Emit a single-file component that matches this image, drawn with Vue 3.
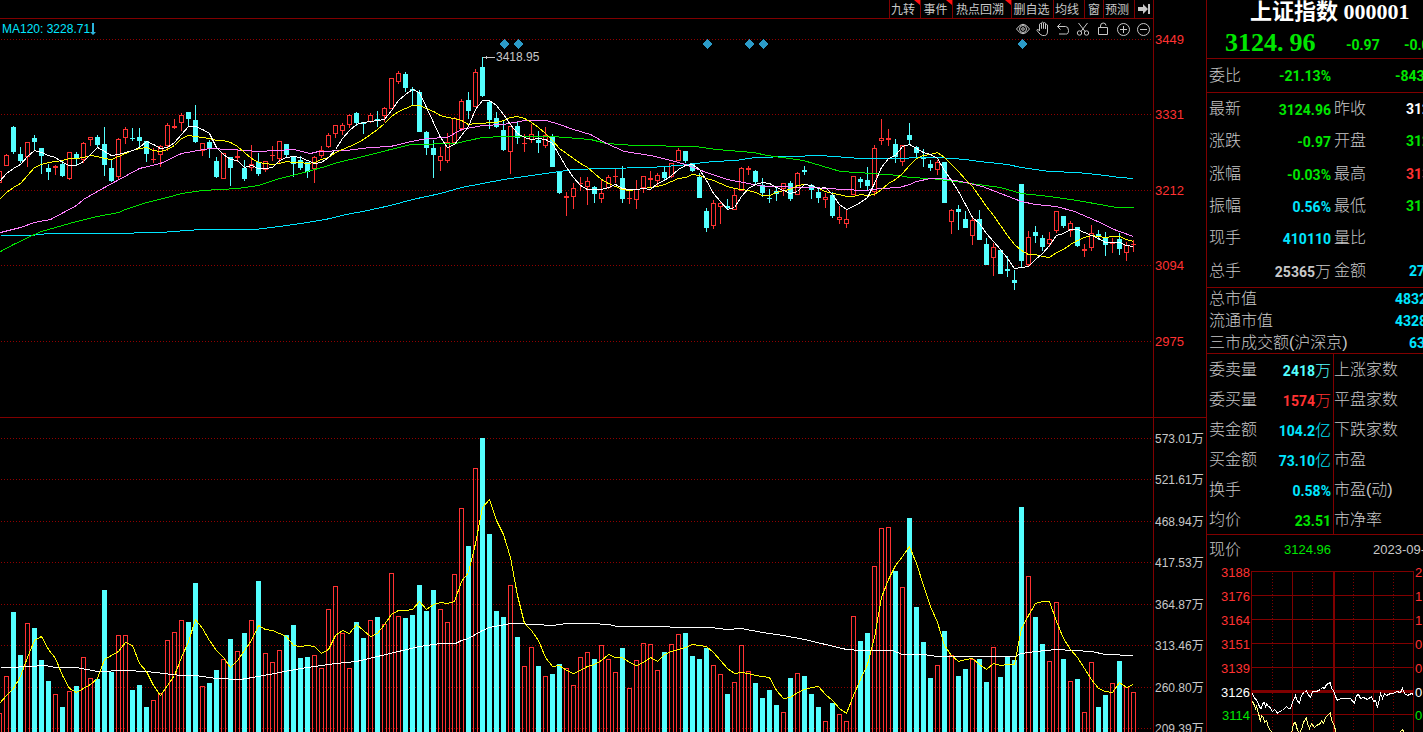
<script setup>
const STEP = 7

// open/close boxes and wicks: [kind, high, top, bottom, low]; d = falling, u = rising
const candles = `u171,171,183,183 u154,155,166,166 d126,127,152,154 d147,154,161,163 u142,142,157,167 d135,138,142,150 d148,148,156,174
d164,168,172,180 u165,166,168,175 d160,164,176,177 u152,152,179,180 d152,154,158,165 u142,143,160,163 u137,137,140,146 d135,137,145,148
d127,144,165,176 d160,168,181,182 u138,139,177,180 u127,129,138,144 d128,138,139,141 d128,137,141,148 d141,141,154,162 u148,159,160,163
u145,146,155,167 u123,125,146,151 u119,126,128,129 u113,115,123,131 d112,112,119,127 d105,120,142,143 u143,143,151,156 d140,142,148,158
d157,161,177,178 u153,153,179,179 d157,157,168,186 u150,156,158,162 d160,168,179,181 u145,164,168,171 d153,162,174,176 u161,161,170,172
u146,155,156,161 u141,141,159,164 d144,144,155,157 d156,157,164,177 d156,160,168,170 d162,162,172,178 u156,157,169,183 u146,150,156,158
u133,135,147,148 u125,125,134,138 u123,125,131,135 u114,115,125,128 d112,113,123,126 d122,122,124,134 u113,115,122,123 d111,119,120,127
u107,108,116,122 u78,78,109,109 u71,73,82,84 d72,74,88,92 d87,89,91,105 d90,92,132,132 d131,132,148,155 d140,148,155,178 u147,156,161,171
u133,142,161,163 u117,118,143,143 u99,101,129,131 d92,100,111,119 u69,72,107,107 d57,67,96,97 d101,102,120,129 d112,118,127,128
d121,130,150,151 u126,126,152,174 d122,126,138,144 u134,143,144,152 u124,134,140,143 d131,140,143,153 u127,135,146,148 d134,136,167,167
d172,172,193,194 u192,196,198,216 u183,188,197,209 u177,183,184,191 u177,181,187,205 d186,187,194,203 u180,193,199,203 u175,177,188,189
u168,176,177,183 d166,178,199,203 u189,198,199,204 u180,189,200,209 u176,176,188,193 u171,178,180,187 u173,175,181,187 d167,172,178,180
u163,163,177,178 u148,150,161,161 d151,151,161,163 d163,163,171,172 d173,177,198,198 d208,211,228,232 u200,203,226,229 u201,203,207,224
d199,206,208,209 u189,195,210,210 u167,168,191,191 u166,168,170,175 d170,171,182,185 d178,185,193,197 d189,198,199,203 d186,191,194,201
u183,183,189,196 d181,183,199,201 u172,173,195,195 d166,170,172,175 d184,185,190,199 d189,192,198,203 u193,197,200,208 d192,195,216,218
u206,217,220,224 u209,219,224,228 u176,176,195,195 d177,179,182,188 d167,180,186,190 u145,148,192,196 u119,138,141,145 u129,138,140,146
d139,144,157,163 u145,145,162,166 d123,135,140,144 d146,147,153,159 d149,157,159,167 d160,164,168,171 u160,162,170,175 d162,162,203,203
u209,210,222,234 d205,209,212,230 d211,219,228,228 u217,220,236,245 d210,219,240,240 d238,244,265,265 u243,247,258,276 d250,250,274,274
d256,269,271,277 d270,280,283,290 d184,184,261,267 u231,237,265,266 d226,232,236,243 d235,238,247,251 u232,239,244,247 u211,211,231,233
d216,216,226,228 u221,223,231,237 d227,227,246,247 u244,249,251,257 u225,233,248,251 d230,234,237,240 d232,237,245,256 u238,243,244,253
d233,239,249,255 u242,245,253,261 u240,244,245,252`.split(/\s+/).map((s, i) => {
  const [high, top, bottom, low] = s.slice(1).split(',').map(Number)
  const x = STEP * i - 1
  const up = s[0] === 'u'
  return { x, up, high, top, bottom, low, solid: !up || bottom - top <= 2 }
})

const volumes = [713, 676, 612, 655, 623, 628, 660, 681, 694, 707, 691, 686, 657, 678, 679, 590, 672, 635, 635, 690, 685, 707, 700, 693, 640, 632, 620,
  622, 583, 686, 683, 670, 659, 639, 651, 633, 620, 581, 653, 662, 650, 635, 625, 658, 657, 655, 668, 609, 586, 633, 668, 622, 638, 620, 617, 624, 573,
  616, 618, 615, 585, 611, 590, 609, 622, 574, 508, 546, 468, 438, 534, 611, 617, 585, 637, 666, 647, 666, 676, 674, 664, 668, 685, 657, 652, 659, 645,
  659, 672, 648, 688, 660, 643, 644, 670, 652, 644, 634, 633, 656, 659, 648, 665, 674, 694, 682, 645, 671, 683, 698, 690, 705, 712, 678, 673, 676, 694,
  707, 721, 703, 714, 721, 616, 641, 633, 566, 528, 527, 571, 587, 518, 607, 642, 678, 665, 631, 655, 676, 669, 659, 659, 682, 647, 677, 656, 660, 507,
  576, 617, 644, 661, 602, 659, 681, 679, 712, 662, 707, 695, 683, 661, 687, 692]

const perBar = (ys) => ys.map((y, i) => `${STEP * i - 1},${y}`).join(' ')

const ma5 = perBar([181, 173, 168, 164, 156, 150, 152, 155, 157, 162, 165, 165, 161, 154, 147, 151, 155, 154, 152, 150, 147, 141, 144, 148, 147, 142,
  134, 126, 126, 129, 133, 147, 154, 159, 160, 167, 165, 168, 168, 167, 160, 157, 156, 157, 160, 163, 162, 157, 149, 138, 130, 124, 122, 121, 120, 119,
  110, 100, 94, 89, 92, 107, 122, 137, 147, 144, 135, 126, 109, 100, 100, 105, 114, 124, 133, 137, 139, 138, 139, 143, 155, 167, 177, 185, 189, 189, 189,
  187, 184, 188, 189, 189, 188, 189, 183, 180, 175, 169, 165, 164, 169, 180, 193, 201, 209, 207, 196, 188, 184, 182, 183, 187, 190, 193, 191, 184, 185,
  188, 187, 194, 204, 209, 206, 202, 197, 183, 167, 158, 155, 146, 144, 148, 152, 154, 158, 170, 180, 191, 204, 217, 223, 233, 241, 249, 258, 268, 267,
  266, 259, 253, 245, 235, 233, 229, 229, 232, 235, 238, 242, 242, 242, 245, 246])

const ma10 = perBar([199, 192, 187, 183, 175, 167, 164, 162, 161, 160, 158, 158, 157, 155, 156, 158, 159, 156, 153, 150, 148, 147, 150, 151, 149, 145,
  138, 135, 136, 137, 138, 140, 140, 142, 146, 152, 158, 162, 163, 164, 163, 161, 162, 162, 163, 162, 159, 157, 152, 149, 146, 143, 139, 134, 129, 123,
  116, 111, 108, 105, 105, 108, 111, 115, 117, 118, 120, 124, 123, 123, 122, 122, 120, 117, 116, 118, 122, 127, 133, 140, 148, 153, 158, 163, 167, 173,
  179, 183, 186, 189, 190, 189, 188, 187, 186, 184, 181, 178, 177, 174, 175, 178, 180, 183, 186, 188, 189, 190, 192, 195, 195, 192, 190, 189, 185, 184,
  185, 188, 191, 193, 194, 196, 196, 194, 195, 194, 189, 183, 179, 173, 165, 158, 155, 154, 152, 157, 164, 171, 179, 186, 196, 206, 215, 225, 235, 244,
  250, 254, 254, 256, 257, 252, 249, 244, 240, 237, 235, 236, 237, 236, 236, 239, 241])

const ma20 = '0,232 20,227 34,222 50,219 76,205 83,199 104,187 139,168 160,163 181,153 209,148 230,149 258,151 293,149 310,153 318,151 346,150 369,147 390,146 411,141 427,138 447,137 461,129 482,125 503,124 524,120 546,120 559,124 573,129 590,134 606,143 624,151 650,155 671,160 685,164 706,172 727,179 748,183 765,186 811,187 843,189 864,190 881,188 899,187 909,184 916,181 930,178 944,178 965,182 982,186 1000,193 1021,201 1035,204 1056,206 1074,211 1095,220 1116,230 1133,236'
const ma60 = '0,251 13,244 34,234 41,231 55,227 76,221 97,216 118,212 125,209 146,202 167,197 181,193 202,190 237,188 258,185 279,178 300,173 325,166 337,162 363,156 390,149 411,144 455,143 468,140 482,137 503,136 552,136 590,139 606,143 635,145 695,146 716,149 753,152 767,155 803,160 840,171 857,172 899,175 909,177 930,178 955,181 1000,187 1021,193 1049,196 1077,200 1105,205 1116,207 1133,207'
const ma120 = '0,235 30,235 48,233 108,233 160,232 200,229 255,229 279,226 300,223 325,219 346,214 367,210 390,205 412,199 440,193 461,187 482,183 503,179 545,173 573,169 603,168 650,167 678,165 713,161 735,160 755,157 790,156 820,155 860,158 881,158 937,157 965,159 979,161 1007,164 1021,167 1049,171 1077,172 1105,175 1119,177 1133,178'

const volShort = perBar([703, 695, 688, 676, 657, 640, 636, 649, 658, 675, 688, 692, 688, 684, 678, 659, 655, 651, 642, 645, 663, 671, 685, 695, 685,
  675, 657, 641, 619, 628, 640, 650, 657, 667, 660, 650, 640, 625, 629, 630, 633, 636, 645, 646, 645, 646, 653, 649, 635, 630, 633, 624, 630, 636, 633,
  624, 614, 610, 610, 609, 601, 609, 604, 602, 603, 601, 581, 572, 543, 507, 499, 520, 534, 557, 595, 623, 630, 640, 657, 666, 665, 670, 673, 670, 666,
  664, 660, 654, 657, 657, 662, 665, 662, 657, 661, 654, 651, 649, 647, 644, 645, 646, 652, 660, 668, 673, 672, 673, 675, 676, 677, 690, 698, 697, 692,
  689, 687, 686, 694, 700, 708, 713, 695, 679, 664, 637, 597, 579, 565, 556, 546, 563, 585, 606, 622, 645, 655, 661, 659, 658, 664, 669, 663, 665, 664,
  664, 628, 615, 603, 601, 601, 621, 638, 649, 657, 668, 679, 688, 691, 692, 682, 687, 684])
const volLong = '0,667 10,667 45,665 55,667 76,667 97,671 125,670 146,671 181,675 195,675 216,678 240,679 258,676 279,672 300,668 335,663 356,661 377,656 398,651 419,646 440,643 455,643 461,640 468,638 482,630 489,627 510,623 517,623 552,625 566,623 590,623 608,624 617,626 660,626 678,627 710,627 727,629 741,628 762,632 783,635 804,639 825,644 846,649 860,650 892,650 902,654 923,654 937,656 965,656 1014,656 1021,653 1035,651 1056,649 1091,651 1105,654 1133,655'

const priceAxis = [[39, 3449], [114, 3331], [190, 3212], [265, 3094], [341, 2975]]
const volumeAxis = [[438, '573.01'], [479, '521.61'], [521, '468.94'], [562, '417.53'], [604, '364.87'], [645, '313.46'], [687, '260.80'], [728, '209.39']]
const eventMarks = [504, 518, 707, 749, 763, 1022]

const tabs = [
  { name: '九转', size: 'w31', hot: true }, { name: '事件', size: 'w32', hot: true }, { name: '热点回溯', size: 'w59', hot: true },
  { name: '删自选', size: 'w42' }, { name: '均线', size: 'w31' }, { name: '窗', size: 'w19' }, { name: '预测', size: 'w31' },
]

const quotes = [
  ['最新', '3124.96', '', 'green', '昨收', '312', 'white mid'],
  ['涨跌', '-0.97', '', 'green', '开盘', '312', 'green mid'],
  ['涨幅', '-0.03%', '', 'green', '最高', '313', 'red mid'],
  ['振幅', '0.56%', '', 'cyan', '最低', '311', 'green mid'],
  ['现手', '410110', '', 'cyan', '量比', '', ''],
  ['总手', '25365', '万', 'grey', '金额', '27', 'cyan short'],
]
const caps = [['总市值', '4832', 'long'], ['流通市值', '4328', 'long'], ['三市成交额(沪深京)', '63', 'short']]
const stats = [
  ['委卖量', '2418', '万', 'aqua', '上涨家数'],
  ['委买量', '1574', '万', 'red', '平盘家数'],
  ['卖金额', '104.2', '亿', 'cyan', '下跌家数'],
  ['买金额', '73.10', '亿', 'cyan', '市盈'],
  ['换手', '0.58%', '', 'cyan', '市盈(动)'],
  ['均价', '23.51', '', 'green', '市净率'],
]

const miniAxis = [[11, '3188', '2', 'red'], [35, '3176', '1', 'red'], [59, '3164', '1', 'red'], [83, '3151', '0', 'red'], [107, '3139', '0', 'red'], [131, '3126', '0.', 'white'], [154, '3114', '0.', 'green']]
// intraday samples sit on a grid three times finer than the drawing
const third = (pts) => pts.map(([x, y]) => `${Math.round(x / 3) - 4},${Math.round(y / 3) - 30}`).join(' ')
const intraday = third([[148, 490], [152, 505], [156, 503], [160, 510], [165, 520], [168, 531], [175, 533], [178, 518], [182, 516], [185, 532], [190, 520], [196, 527], [200, 531], [204, 540], [208, 542], [213, 536], [218, 543], [223, 550], [228, 543], [238, 541], [248, 527], [256, 533], [262, 535], [266, 515], [275, 494], [280, 508], [287, 518], [292, 505], [298, 490], [304, 487], [308, 480], [312, 490], [320, 502], [328, 484], [340, 484], [352, 478], [358, 470], [362, 475], [370, 462], [380, 455], [384, 475], [390, 480], [395, 497], [403, 511], [412, 505], [440, 505], [452, 518], [458, 495], [465, 492], [472, 505], [480, 500], [492, 508], [505, 497], [510, 512], [517, 510], [522, 532], [528, 505], [531, 490], [536, 505], [542, 490], [550, 495], [560, 488], [570, 490], [580, 483], [590, 485], [597, 475], [603, 490], [612, 495], [625, 488], [631, 492]])
const average = [
  third([[148, 512], [152, 525], [156, 535], [160, 528], [165, 550], [170, 572], [175, 555], [180, 562], [184, 575], [190, 570], [196, 590], [200, 600], [208, 608]]),
  third([[264, 608], [270, 580], [276, 577], [282, 600], [288, 606], [293, 598], [300, 575], [308, 562], [313, 580], [318, 595], [325, 580], [332, 590], [340, 585], [350, 578], [355, 570], [360, 580], [366, 560], [375, 552], [380, 547], [384, 570], [390, 580], [398, 608]]),
  third([[585, 608], [597, 596], [602, 608]]),
]
</script>

<template>
  <div class="terminal">
    <main class="charts">
      <nav class="tabs">
        <button v-for="t in tabs" :key="t.name" type="button" class="tab" :class="[t.size, { hot: t.hot }]">{{ t.name }}</button>
        <button type="button" class="tab last" aria-label="收起">
          <svg width="13" height="12" viewBox="0 0 13 12"><path d="M0 4h5V1l5 5-5 5V8H0z M10 1h2v10h-2z" fill="#c8c8c8" /></svg>
        </button>
      </nav>

      <section class="pane price">
        <svg class="plot" viewBox="0 19 1153 398" preserveAspectRatio="none" shape-rendering="crispEdges">
          <g class="dots"><line v-for="[y] in priceAxis" :key="y" x1="1" :y1="y + 0.5" x2="1153" :y2="y + 0.5" /></g>
          <g v-for="c in candles" :key="c.x" :class="c.up ? 'up' : 'down'">
            <rect class="fill" :x="c.x" :y="c.high" width="1" :height="c.low - c.high" />
            <rect v-if="c.solid" class="fill" :x="c.x - 2" :y="c.top" width="5" :height="c.bottom - c.top" />
            <rect v-else class="hollow" :x="c.x - 1.5" :y="c.top + 0.5" width="4" :height="c.bottom - c.top - 1" />
          </g>
          <g class="lines" transform="translate(0.5 0.5)">
            <polyline class="l-cyan" :points="ma120" />
            <polyline class="l-green" :points="ma60" />
            <polyline class="l-pink" :points="ma20" />
            <polyline class="l-yellow" :points="ma10" />
            <polyline class="l-white" :points="ma5" />
          </g>
          <path v-for="x in eventMarks" :key="x" class="mark" :d="`M${x} 39l5 5-5 5-5-5z`" />
          <path class="arrow" d="M483 57.5h12M486.500 56v3M485.500 57v1" />
          <text class="peak" x="496" y="61">3418.95</text>
        </svg>
        <svg class="axis" width="52" height="398" viewBox="0 19 52 398">
          <text v-for="[y, label] in priceAxis" :key="y" class="axis-price" x="1" :y="y + 5">{{ label }}</text>
        </svg>
        <p class="ma-label">MA120: 3228.71<svg width="6" height="14" viewBox="0 0 6 14"><path d="M2 1h2v9h2l-3 3-3-3h2z" fill="#2bb4dc" /></svg></p>
        <div class="tools">
          <button type="button" aria-label="显示"><svg viewBox="0 0 16 16"><path d="M1.500 8Q8-1.500 14.500 8 8 17.500 1.500 8z" /><circle cx="8" cy="8" r="3.500" /><circle cx="8" cy="8" r="1.300" /></svg></button>
          <button type="button" aria-label="平移"><svg viewBox="0 0 16 16"><path d="M4.500 9V3.200q1-1.400 2 0V7.500 1.800q1-1.300 2 0V7.500 2.200q1-1.300 2 0V8 4q1-1.200 2 0V10q0 4.500-3 4.500H7.500Q5.500 14.500 2 9.500q0-1.500 1.300-1L4.500 10z" /></svg></button>
          <button type="button" aria-label="撤销"><svg viewBox="0 0 16 16"><path d="M5.500 2.500L2.500 5.500l3 3M2.500 5.500h8q3 0 3 4t-3 3.500H4" /></svg></button>
          <button type="button" aria-label="剪切"><svg viewBox="0 0 16 16"><path d="M3.500 2l7 9M12.500 2l-7 9" /><circle cx="4.500" cy="12" r="2.200" /><circle cx="11.500" cy="12" r="2.200" /></svg></button>
          <button type="button" aria-label="锁定"><svg viewBox="0 0 16 16"><path d="M3.500 6.500h9v7h-9zM5.500 6.500V5q0-3 2.700-3T11 4.500" /></svg></button>
          <button type="button" aria-label="放大"><svg viewBox="0 0 16 16"><circle cx="8.500" cy="8.500" r="6" /><path d="M5 8.500h7M8.500 5v7" /></svg></button>
          <button type="button" aria-label="缩小"><svg viewBox="0 0 16 16"><circle cx="8.500" cy="8.500" r="6" /><path d="M5 8.500h7" /></svg></button>
        </div>
      </section>

      <section class="pane volume">
        <svg class="plot" viewBox="0 418 1153 314" preserveAspectRatio="none" shape-rendering="crispEdges">
          <g class="dots"><line v-for="[y] in volumeAxis" :key="y" x1="1" :y1="y + 0.5" x2="1153" :y2="y + 0.5" /></g>
          <template v-for="(y, i) in volumes" :key="i">
            <rect v-if="candles[i].up" class="hollow bar" :x="candles[i].x - 1.5" :y="y + 0.5" width="4" height="330" />
            <rect v-else class="solid" :x="candles[i].x - 2" :y="y" width="5" height="330" />
          </template>
          <g class="lines" transform="translate(0.5 0.5)">
            <polyline class="l-white" :points="volLong" />
            <polyline class="l-yellow" :points="volShort" />
          </g>
        </svg>
        <svg class="axis" width="52" height="314" viewBox="0 418 52 314">
          <text v-for="[y, label] in volumeAxis" :key="y" class="axis-vol" x="1" :y="y + 5">{{ label }}万</text>
        </svg>
      </section>
    </main>

    <aside class="panel">
      <header class="head">
        <h1>上证指数 000001</h1>
        <div class="last-price"><strong><span>3124.</span><span>96</span></strong><b class="chg">-0.97</b><b class="cut pct">-0.0</b></div>
      </header>
      <div class="ratio">
        <div class="cell"><span>委比</span><b class="green">-21.13%</b></div>
        <div class="cell"><b class="green cut long">-843</b></div>
      </div>
      <div class="quotes">
        <div v-for="q in quotes" :key="q[0]" class="row">
          <div class="cell"><span>{{ q[0] }}</span><b :class="q[3]">{{ q[1] }}<i>{{ q[2] }}</i></b></div>
          <div class="cell"><span>{{ q[4] }}</span><b class="cut" :class="q[6]">{{ q[5] }}</b></div>
        </div>
      </div>
      <div class="caps">
        <div v-for="c in caps" :key="c[0]" class="cell"><span>{{ c[0] }}</span><b class="cyan cut" :class="c[2]">{{ c[1] }}</b></div>
      </div>
      <div class="stats">
        <div v-for="s in stats" :key="s[0]" class="row">
          <div class="cell"><span>{{ s[0] }}</span><b :class="s[3]">{{ s[1] }}<i>{{ s[2] }}</i></b></div>
          <div class="cell"><span>{{ s[4] }}</span></div>
        </div>
      </div>
      <div class="mini">
        <div class="row mini-head">
          <div class="cell"><span>现价</span><em class="green">3124.96</em></div>
          <div class="cell"><em class="cut date">2023-09-</em></div>
        </div>
        <svg class="mini-plot" width="216" height="172" viewBox="0 0 216 172" shape-rendering="crispEdges">
          <g class="grid">
            <path d="M44.500 11v161M85.500 11v161M166.500 11v161M206.500 11v161" />
            <path d="M44 11.500h163M44 35.500h163M44 59.500h163M44 83.500h163M44 107.500h163M44 154.500h163" />
            <path class="thick" d="M127 11v161" />
            <path class="thicker" d="M44 131.500h163" />
            <path class="dotted" d="M65.500 13v159M105.500 13v159M146.500 13v159M186.500 13v159" />
          </g>
          <g transform="translate(0.5 0.5)" fill="none">
            <polyline v-for="(p, i) in average" :key="i" :points="p" class="avg" />
            <polyline :points="intraday" class="now" />
          </g>
          <template v-for="[y, l, r, c] in miniAxis" :key="y">
            <text :class="c" x="43" :y="y + 6" text-anchor="end">{{ l }}</text>
            <text :class="c" x="208" :y="y + 6">{{ r }}</text>
          </template>
        </svg>
      </div>
    </aside>
  </div>
</template>

<style>
html, body { background: #000; overflow: hidden; }
</style>

<style scoped>
.terminal { display: flex; height: 100vh; overflow: hidden; background: #000; color: #c8c8c8; font-family: "Liberation Sans", "Noto Sans CJK SC", sans-serif; }
.charts { flex: 1; min-width: 0; display: flex; flex-direction: column; }
.tabs { height: 18px; display: flex; justify-content: flex-end; padding-right: 52px; border-bottom: 1px solid #800000; position: relative; }
.tabs::after { content: ""; position: absolute; right: 0; bottom: -1px; width: 52px; height: 1px; background: #000; }
.tab { position: relative; box-sizing: border-box; padding: 0; border: 0; border-left: 1px solid #800000; background: #000; color: #c8c8c8; font: 12px/18px "Noto Sans CJK SC", sans-serif; white-space: nowrap; }
.w32 { width: 32px; padding-right: 2px; }
.w59 { width: 59px; padding-right: 4px; }
.w42 { width: 42px; padding-right: 2px; }
.w31 { width: 31px; padding-right: 4px; }
.w19 { width: 19px; }
.last { border-right: 1px solid #800000; width: 20px; display: flex; align-items: center; justify-content: center; }
.hot::after { content: ""; position: absolute; top: 0; right: 0; border-top: 5px solid #ff1010; border-left: 6px solid transparent; }
.pane { position: relative; display: flex; }
.price { height: 398px; border-bottom: 1px solid #800000; }
.volume { flex: 1; min-height: 0; }
.plot { flex: 1; min-width: 0; height: 100%; display: block; border-right: 1px solid #800000; }
.axis { flex: none; display: block; }
.dots line { stroke: #900000; stroke-dasharray: 1 2; }
.up .fill { fill: #ff3232; }
.down .fill, .solid { fill: #54ffff; }
.hollow { fill: #000; stroke: #ff3232; }
.bar { fill: none; }
.lines polyline { fill: none; stroke-width: 1; }
.l-cyan { stroke: #00e6ff; }
.l-green { stroke: #00e600; }
.l-pink { stroke: #ff80ff; }
.l-yellow { stroke: #ffff00; }
.l-white { stroke: #fff; }
.mark { fill: #2b9bc8; }
.arrow { stroke: #c8c8c8; fill: none; }
.peak { fill: #c8c8c8; font-size: 12px; }
.axis-price { fill: #ff3232; font-size: 13px; }
.axis-vol { fill: #c8c8c8; font-size: 12px; }
.ma-label { position: absolute; left: 2px; top: 2px; margin: 0; display: flex; align-items: center; color: #00e6ff; font-size: 12px; line-height: 16px; }
.tools { position: absolute; right: 53px; top: 2px; display: flex; }
.tools button { width: 20px; height: 16px; padding: 0; border: 0; background: none; display: flex; justify-content: center; }
.tools svg { width: 16px; height: 16px; fill: none; stroke: #c8c8c8; }

.panel { box-sizing: border-box; width: 217px; flex: none; overflow: hidden; border-left: 1px solid #800000; font-size: 16px; font-weight: 300; white-space: nowrap; }
.head { height: 58px; border-bottom: 1px solid #800000; }
h1 { margin: 0; padding-left: 43px; color: #fff; font: bold 22px/24px "Liberation Serif", "Noto Sans CJK SC", serif; }
.last-price { display: flex; align-items: center; height: 38px; color: #00e600; }
.last-price strong { display: flex; gap: 6px; width: 121px; padding-left: 18px; font: bold 26px/32px "Liberation Serif", serif; }
.chg, .pct { padding-top: 4px; }
.pct { width: 19px; }
b { font: bold 14px/22px Roboto, "Liberation Sans", sans-serif; }
i { font: 300 16px/22px "Noto Sans CJK SC", sans-serif; }
em { font: 13px/22px "Liberation Sans", sans-serif; }
.green { color: #00e600; fill: #00e600; }
.cyan { color: #00e6ff; }
.aqua { color: #54ffff; }
.red { color: #ff3232; fill: #ff3232; }
.white { color: #fff; fill: #fff; }
.grey { color: #c8c8c8; }
.cut { margin-left: auto; text-align: left; }
.short { width: 14px; }
.mid { width: 17px; }
.long { width: 28px; }
.date { width: 50px; }
.cell { display: flex; align-items: center; justify-content: space-between; min-width: 0; padding-left: 2px; line-height: 22px; }
.row, .ratio { display: grid; grid-template-columns: 126px 1fr; }
.row > .cell:first-child, .ratio > .cell:first-child { padding-right: 2px; }
.row > .cell + .cell { padding-left: 1px; }
.ratio { height: 33px; border-bottom: 1px solid #800000; }
.quotes { box-sizing: border-box; display: grid; grid-template-rows: repeat(6, 1fr); height: 195px; border-bottom: 1px solid #800000; }
.quotes .cell span, .stats .cell span, .mini .cell span { line-height: 24px; }
.caps { display: grid; grid-template-rows: repeat(3, 22px); height: 65px; border-bottom: 1px solid #800000; }
.stats { border-bottom: 1px solid #800000; }
.stats .row { height: 30px; }
.stats .cell { padding-top: 1px; }
.stats .cell + .cell { border-left: 1px solid #800000; padding-left: 0; }
.mini-head { height: 30px; }
.mini { display: flex; flex-direction: column; }
.mini-plot { margin-top: -5px; display: block; font: 13px "Liberation Sans", sans-serif; }
.grid path { stroke: #800000; fill: none; }
.grid .thick { stroke-width: 2; }
.grid .thicker { stroke-width: 3; }
.grid .dotted { stroke-dasharray: 1 2; }
.now { stroke: #fff; }
.avg { stroke: #ffff80; }
</style>
